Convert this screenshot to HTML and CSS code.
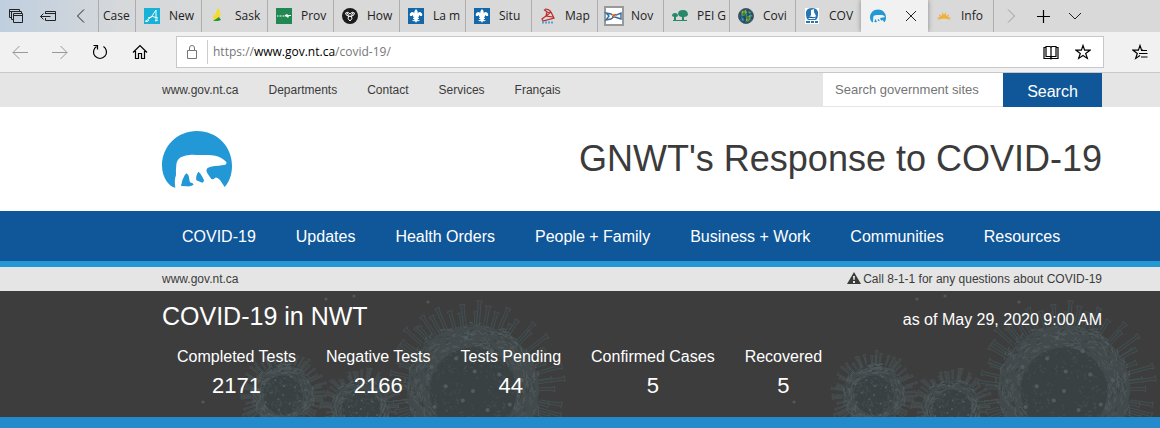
FILE: index.html
```html
<!DOCTYPE html>
<html lang="en">
<head>
<meta charset="utf-8">
<title>GNWT's Response to COVID-19</title>
<link rel="stylesheet" href="styles.css">
</head>
<body>
<svg class="defs" aria-hidden="true">
  <symbol id="bear" viewBox="0 0 210 171">
    <path fill="#2398d6" d="M40 170C22 168 0 139 0 104C0 45 46 0 105 0S210 45 210 104C210 130 202 152 188 168L174 147Q164 138 160 140Q153 146 148 144L138 130Q130 118 136 112Q146 104 170 104L190 101Q195 98 193 93Q181 79 160 74Q148 71 128 72Q110 73 92 71Q72 70 56 79Q44 87 43 102Q41 118 42 132Q36 149 40 170Z"/>
    <path fill="#2398d6" d="M73 127Q80 130 81 138Q82 149 84 154Q94 156 95 161Q85 167 75 166L57 165Q59 148 68 133ZM109 122Q118 128 126 148Q126 154 121 155L103 148Q100 136 109 122Z"/>
  </symbol>
  <symbol id="lily" viewBox="0 0 16 16">
    <path fill="#1467a8" d="M0 0h16v16H0z"/>
    <path fill="#fff" d="M8 1Q11 4 9 8V9Q9 4 12 4Q15 5 14 8L12 8Q12 6 11 8L10 10H11V11H9.500Q10 13 12 12Q11 14 9 13L8 15L7 13Q5 14 4 12Q6 13 6.500 11H5V10H6L5 8Q4 6 4 8L2 8Q1 5 4 4Q7 4 7 9V8Q5 4 8 1Z"/>
  </symbol>
</svg>

<header class="browser">
  <div class="tabs">
    <div class="tab-tools">
      <button class="tool" aria-label="Tabs set aside"><svg viewBox="0 0 16 16"><path d="M3.500 9.500h-2v-8h10v2M1.500 3.500h10M5.500 11.500h-2v-8h10v2M5.500 5.500h9v9h-9zM5.500 7.500h9"/></svg></button>
      <button class="tool" aria-label="Set tabs aside"><svg viewBox="0 0 16 16"><path d="M5.500 6V3.500h10v9h-10V10M5.500 5.500h10M.500 8.500h10M3.500 5.500l-3 3 3 3"/></svg></button>
      <button class="tool" aria-label="Scroll tabs left"><svg viewBox="0 0 16 16"><path d="M12 1.500L5.500 8l6.500 6.500"/></svg></button>
    </div>
    <div class="tab tab-cut"><span>Case</span></div>
    <div class="tab"><svg viewBox="0 0 16 16"><path fill="#18b2d8" d="M0 0h16v16H0z"/><path fill="none" stroke="#fff" d="M2 13Q8 10 12 2V13M4 10Q8 7 14 10M1 13Q3 15 5 12M11 13l3-1"/></svg><span>New</span></div>
    <div class="tab"><svg viewBox="0 0 16 16"><path fill="#f6dc23" d="M8 0L10 3L8 12L5 13L6 5ZM5 5L6 12L4 13L3 9ZM9 7L11 5L9 12Z"/><path fill="#259047" d="M3 13L9 9L11 12L8 13Z"/></svg><span>Sask</span></div>
    <div class="tab"><svg viewBox="0 0 16 16"><path fill="#218852" d="M0 0h16v16H0z"/><path stroke="#fff" stroke-dasharray="1 .5" d="M1 8h9"/><path fill="#fff" d="M9 7l2-1 1 1h3v1h-2l-1 2-1-1-2-1z"/></svg><span>Prov</span></div>
    <div class="tab"><svg viewBox="0 0 16 16"><circle cx="8" cy="8" r="8" fill="#1c1c1c"/><g fill="none" stroke="#fff"><path d="M3.500 5Q6 3 8 6Q10 3 12.500 5Q12 8 9.500 8Q11 11 8 13Q5 11 6.500 8Q4 8 3.500 5ZM5 5l3 4 3-4"/></g></svg><span>How</span></div>
    <div class="tab"><svg><use href="#lily"/></svg><span>La m</span></div>
    <div class="tab"><svg><use href="#lily"/></svg><span>Situ</span></div>
    <div class="tab"><svg viewBox="0 0 16 16"><path fill="none" stroke="#bd292b" stroke-width="1.200" d="M5 1Q9 1 11 4L14 10L3 13L2 11L6 8L7 4L4 1.500M11 4L6 8L13 9M7 4l3 1"/><path stroke="#4ba5dc" stroke-width="2" stroke-dasharray="2 1" d="M2 14.500h11"/></svg><span>Map</span></div>
    <div class="tab tab-wide-icon"><svg viewBox="0 0 20 20"><path fill="#fff" stroke="#999" stroke-width="2" d="M1 1h18v18H1z"/><path fill="none" stroke="#356b9f" stroke-width="1.400" d="M2 7l5 1 4 3 6 2V7l-5 2-5 4-5 1 3-4z"/><path fill="#ea8e3f" d="M8 8h4v3H8z"/><path stroke="#b34b43" d="M8 11l4-3"/></svg><span>Nov</span></div>
    <div class="tab"><svg viewBox="0 0 16 16"><g fill="#28896a"><path d="M0 8Q0 5 3 5Q6 5 6 8Q5 9 4 9V12H15V13H1V12H2V9ZM6 6Q6 2 11 2Q16 2 16 7Q15 9 12 9V12H10V9Q7 9 6 6Z"/></g></svg><span>PEI G</span></div>
    <div class="tab"><svg viewBox="0 0 16 16"><circle cx="8" cy="8" r="7.500" fill="#245c83" stroke="#555"/><path fill="#80b83f" d="M4 3l4-1 1 3-3 3-3-1zM8 9l4-2 1 3-3 4-2-1zM10 3l3 2-2 1z"/><path fill="#43a8d3" d="M3 9l3 1v3l-2-1zM8 5l2 1-2 2zM12 6l2 1-1 2z"/><path fill="none" stroke="#183b35" stroke-width=".6" d="M1 6h14M1 10h14M6 1v14M10 1v14"/></svg><span>Covi</span></div>
    <div class="tab"><svg viewBox="0 0 16 16"><path fill="#fff" d="M1 0h14v16H1z"/><path fill="#2476b4" d="M2 7Q1 0 8 0Q15 0 14 7Q14 10 12 12H4Q2 10 2 7ZM2 13h4v2H2zM7 13h3v2H7zM11 13h3v2h-3z"/><path fill="#fff" d="M7 2l3-1 0 3 2 4-1 3H4l3-4z"/><path stroke="#2476b4" d="M4 10l3-1 2 1 3-1"/></svg><span>COV</span></div>
    <div class="tab tab-active"><svg><use href="#bear"/></svg><button class="close" aria-label="Close tab"><svg viewBox="0 0 16 16"><path d="M3 3l10 10M13 3L3 13"/></svg></button></div>
    <div class="tab tab-last"><svg viewBox="0 0 16 16"><path fill="#efb136" d="M1 12L3 10L1 9L4 9L3 6L6 8L6 4L8 7L10 4L10 8L13 6L12 9L15 9L13 10L15 12Q8 9 1 12Z"/></svg><span>Info</span></div>
    <div class="tab-end">
      <button class="tool" aria-label="Scroll tabs right"><svg class="muted" viewBox="0 0 16 16"><path d="M5 1.500L11.500 8 5 14.500"/></svg></button>
      <button class="tool" aria-label="New tab"><svg class="bold" viewBox="0 0 16 16"><path d="M8.500 2v13M2 8.500h13"/></svg></button>
      <button class="tool" aria-label="Tab previews"><svg viewBox="0 0 16 16"><path d="M2 5l6 6 6-6"/></svg></button>
    </div>
  </div>
  <div class="toolbar">
    <div class="history">
      <button class="tool" aria-label="Back"><svg class="muted" viewBox="0 0 16 16"><path d="M16 8.500H1M7.500 2L1 8.500 7.500 15"/></svg></button>
      <button class="tool" aria-label="Forward"><svg class="muted" viewBox="0 0 16 16"><path d="M0 8.500h15M8.500 2L15 8.500 8.500 15"/></svg></button>
      <button class="tool" aria-label="Refresh"><svg class="bold" viewBox="0 0 16 16"><path d="M4.500 2.500A6.500 6.500 0 1 0 11.500 2.500M1.500 1.500h4v4"/></svg></button>
      <button class="tool" aria-label="Home"><svg class="bold" viewBox="0 0 16 16"><path d="M1 8.500L8 1.500l7 7M3.500 7v7.500h3v-5h3v5h3V7"/></svg></button>
    </div>
    <div class="address">
      <svg class="lock" viewBox="0 0 16 16"><path d="M3.500 6.500h9v8h-9zM5.500 6V4Q5.500 1.500 8 1.500Q10.500 1.500 10.500 4V6"/></svg>
      <p class="url">https://<b>www.gov.nt.ca</b>/covid-19/</p>
      <button class="tool" aria-label="Reading view"><svg class="bold" viewBox="0 0 16 16"><path d="M8 3v11M3 2.500h4l1 1 1-1h4v10H9l-1 1-1-1H3zM3 3.500H1v11h6.500l.500.500.500-.500H15v-11h-2"/></svg></button>
      <button class="tool" aria-label="Add to favourites"><svg class="bold" viewBox="0 0 16 16"><path d="M8 1.500l1.600 4.700H15l-4.300 3.200 1.600 5L8 11.500l-4.300 2.900 1.600-5L1 6.200h5.400z"/></svg></button>
    </div>
    <button class="tool hub" aria-label="Hub"><svg class="bold" viewBox="0 0 16 16"><path d="M11 6.200H9.600L8 1.500 6.400 6.200H1l4.300 3.200-1.600 5L8 11.500M9 6.500h6M7 9.500h8.500M9 13h6.500"/></svg></button>
  </div>
</header>

<div class="topbar wrap">
  <nav class="toplinks"><a href="#">www.gov.nt.ca</a><a href="#">Departments</a><a href="#">Contact</a><a href="#">Services</a><a href="#">Français</a></nav>
  <form class="search"><input type="text" aria-label="Search government sites" placeholder="Search government sites"><button type="button">Search</button></form>
</div>
<div class="masthead wrap">
  <svg class="logo" role="img" aria-label="Government of Northwest Territories"><use href="#bear"/></svg>
  <h1>GNWT's Response to COVID-19</h1>
</div>
<nav class="mainnav wrap"><a href="#">COVID-19</a><a href="#">Updates</a><a href="#">Health Orders</a><a href="#">People + Family</a><a href="#">Business + Work</a><a href="#">Communities</a><a href="#">Resources</a></nav>
<div class="notice wrap">
  <a href="#">www.gov.nt.ca</a>
  <p><svg viewBox="0 0 14 12"><path fill="#3b3b3b" d="M7 0L14 12H0Z"/><path fill="#e5e5e5" d="M6 4h2l-.4 4H6.400zM6 9h2v2H6z"/></svg>Call 8-1-1 for any questions about COVID-19</p>
</div>
<main class="stats wrap">
  <svg class="backdrop" aria-hidden="true">
    <defs><pattern id="viruses" width="591" height="126" patternUnits="userSpaceOnUse"></pattern></defs>
    <rect width="100%" height="100%" fill="url(#viruses)"/>
  </svg>
  <div class="stats-head"><h2>COVID-19 in NWT</h2><p>as of May 29, 2020 9:00 AM</p></div>
  <dl>
    <div><dt>Completed Tests</dt><dd>2171</dd></div>
    <div><dt>Negative Tests</dt><dd>2166</dd></div>
    <div><dt>Tests Pending</dt><dd>44</dd></div>
    <div><dt>Confirmed Cases</dt><dd>5</dd></div>
    <div><dt>Recovered</dt><dd>5</dd></div>
  </dl>
</main>
<script src="viruses.js"></script>
</body>
</html>
```

FILE: styles.css
```css
* { box-sizing: border-box; }
body {
  margin: 0;
  min-height: 100vh;
  background: #238acb;
  font-family: "Liberation Sans", Arial, sans-serif;
  font-size: 12px;
  color: #3b3b3b;
}
h1, h2, p, dl, dd { margin: 0; font-weight: 400; }
a { color: inherit; text-decoration: none; }
button { border: 0; background: none; padding: 0; font: inherit; }
.defs { position: absolute; width: 0; height: 0; }
.wrap { padding-left: 162px; padding-right: 58px; }

.browser { background: #f1f1f1; border-bottom: 1px solid #c8c8c8; font-family: "Open Sans", "Noto Sans", sans-serif; }
.tabs { display: flex; height: 32px; background: linear-gradient(90deg, #bfcfdf, #d6d8da 120px, #d9d9d9 240px); }
.tab-tools { display: flex; align-items: center; gap: 16px; width: 98px; padding-left: 8px; flex: none; }
.tool { flex: none; width: 16px; height: 16px; }
.tool svg, .lock, .close svg { display: block; width: 16px; height: 16px; fill: none; stroke: #222; stroke-width: 1; }
.tool .muted { stroke: #999; }
.tool .bold { stroke: #000; stroke-width: 1.2; }
.tab { display: flex; flex: none; align-items: center; gap: 9px; width: 66px; padding: 0 0 0 8px; border-left: 1px solid #adadad; color: #222; }
.tab > svg { flex: none; width: 16px; height: 16px; }
.tab span { white-space: nowrap; font-size: 12px; line-height: 20px; }
.tab-cut { width: 37px; padding-left: 4px; }
.tab-wide-icon { padding-left: 6px; gap: 7px; }
.tab.tab-wide-icon > svg { width: 20px; height: 20px; }
.tab-active { width: 67px; background: #f1f1f1; border-left: 0; justify-content: space-between; padding: 0 9px; box-shadow: 0 0 5px #888; clip-path: inset(0 -6px 0 -6px); }
.tab-last { border-left: 0; border-right: 1px solid #adadad; }
.tab-end { display: flex; align-items: center; gap: 16px; padding-left: 9px; }
.close { width: 16px; height: 16px; }
.toolbar { display: flex; align-items: center; height: 40px; }
.history { display: flex; flex: none; gap: 24px; width: 176px; padding-left: 12px; }
.address { display: flex; flex: 1; align-items: center; height: 32px; padding: 0 12px 0 7px; background: #fff; border: 1px solid #c8c8c8; }
.lock { stroke: #777; flex: none; }
.url { flex: 1; margin-left: 7px; padding-left: 5px; border-left: 1px solid #ccc; color: #777; font-size: 12px; line-height: 24px; }
.url b { font-weight: 400; color: #000; }
.address .tool + .tool { margin-left: 16px; }
.hub { margin: 0 12px 0 28px; }

.topbar { display: flex; justify-content: space-between; height: 34px; background: #e5e5e5; }
.toplinks { display: flex; align-items: center; gap: 30px; }
.search { display: flex; align-items: flex-start; }
.search input { width: 180px; height: 33px; padding: 0 12px; border: 0; background: #fff; font: 13px "Liberation Sans", Arial, sans-serif; color: #333; }
.search input::placeholder { color: #757575; }
.search button { width: 99px; height: 34px; padding-top: 3px; background: #0f5799; color: #fff; font-size: 16px; }
.masthead { display: flex; align-items: center; justify-content: space-between; height: 104px; background: #fff; }
.logo { width: 70px; height: 57px; }
h1 { font-size: 36px; line-height: 40px; }
.mainnav { display: flex; align-items: center; gap: 40px; height: 56px; padding-top: 2px; padding-left: 182px; background: #0f5799; border-bottom: 6px solid #2398d5; color: #fff; font-size: 16px; }
.notice { display: flex; align-items: center; justify-content: space-between; height: 24px; background: #e5e5e5; }
.notice svg { width: 14px; height: 12px; margin-right: 2px; vertical-align: -1px; }
.stats { position: relative; min-height: 126px; padding-top: 9px; background: #3d3d3d; color: #fff; font-size: 16px; }
.backdrop { position: absolute; inset: 0; width: 100%; height: 100%; }
.stats-head, .stats dl { position: relative; display: flex; }
.stats-head { align-items: center; justify-content: space-between; }
.stats-head p { padding-top: 8px; }
h2 { font-size: 25px; line-height: 32px; }
.stats dl { gap: 30px; margin: 15px 0 0 15px; text-align: center; }
dt { line-height: 20px; }
dd { padding-top: 6px; font-size: 22px; line-height: 26px; }
```

FILE: viruses.js
```js
const NS = 'http://www.w3.org/2000/svg';
const pattern = document.getElementById('viruses');
let seed = 11;
function rnd() { seed = (seed * 16807) % 2147483647; return seed / 2147483647; }
function shape(name, attrs) {
  const el = document.createElementNS(NS, name);
  for (const key in attrs) el.setAttribute(key, attrs[key]);
  pattern.appendChild(el);
}
function virus(cx, cy, core, reach, count) {
  const at = (r, a) => (cx + r * Math.cos(a)).toFixed(1) + ' ' + (cy + r * Math.sin(a)).toFixed(1);
  for (let i = 0; i < count; i++) {
    const a = i / count * Math.PI * 2 + (rnd() - 0.5) * 0.12;
    const tip = reach * (0.82 + rnd() * 0.18);
    const w = core > 50 ? 1.4 : 0.6;
    const inner = core * 0.92;
    const d = 'M' + at(inner, a - w / inner) + 'L' + at(tip - 3, a - w / tip) + 'L' + at(tip, a - 2 * w / tip)
      + 'L' + at(tip, a + 2 * w / tip) + 'L' + at(tip - 3, a + w / tip) + 'L' + at(inner, a + w / inner);
    shape('path', { d, fill: '#394041', stroke: '#4b5557', 'stroke-width': 0.6 });
  }
  shape('circle', { cx, cy, r: core, fill: '#434a4c' });
  shape('circle', { cx, cy, r: core * 0.66, fill: '#3a4142' });
  for (let i = 0; i < core * 13; i++) {
    const a = rnd() * Math.PI * 2;
    const r = core * (0.15 + 0.9 * Math.sqrt(rnd()));
    const outer = r > core * 0.67;
    const len = outer ? 2 + rnd() * 4 : 1 + rnd() * 2;
    shape('path', {
      d: 'M' + at(r, a) + 'L' + at(r + (rnd() - 0.5) * 5, a + len / r),
      stroke: rnd() > 0.35 ? (outer ? '#515a5d' : '#465052') : '#353c3d',
      'stroke-width': 0.8, fill: 'none'
    });
  }
  for (let i = 0; i < 16; i++) {
    const a = i * 2.4;
    const p = at(core * 0.21 * Math.sqrt(i), a).split(' ');
    shape('circle', { cx: p[0], cy: p[1], r: core > 50 ? 2 : 1, fill: '#525c5e' });
  }
}
virus(361, 118, 29, 42, 54);
virus(283, 104, 30, 45, 56);
virus(473, 100, 66, 93, 64);
[[326, 8], [354, 5], [428, 11], [203, 111]].forEach(([cx, cy]) => shape('circle', { cx, cy, r: 1.6, fill: '#50585a' }));
```
